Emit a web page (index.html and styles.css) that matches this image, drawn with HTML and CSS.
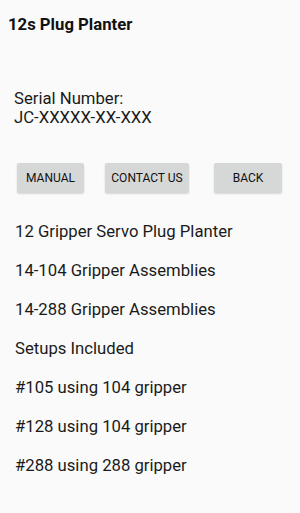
FILE: index.html
```html
<!DOCTYPE html>
<html lang="en">
<head>
    <meta charset="UTF-8">
    <meta name="viewport" content="width=device-width, initial-scale=1.0">
    <title>12s Plug Planter</title>
    <link rel="stylesheet" href="styles.css">
</head>
<body>
    <h1 class="title">12s Plug Planter</h1>

    <div class="serial">
        <div>Serial Number:</div>
        <div>JC-XXXXX-XX-XXX</div>
    </div>

    <div class="buttons">
        <button class="btn btn-manual">MANUAL</button>
        <button class="btn btn-contact">CONTACT US</button>
        <button class="btn btn-back">BACK</button>
    </div>

    <ul class="info-list">
        <li>12 Gripper Servo Plug Planter</li>
        <li>14-104 Gripper Assemblies</li>
        <li>14-288 Gripper Assemblies</li>
        <li>Setups Included</li>
        <li>#105 using 104 gripper</li>
        <li>#128 using 104 gripper</li>
        <li>#288 using 288 gripper</li>
    </ul>
</body>
</html>
```

FILE: styles.css
```css
body {
    margin: 0;
    font-family: Roboto, "Noto Sans", sans-serif;
    background-color: #fafafa;
    color: #1a1a1a;
    width: 300px;
    height: 513px;
    overflow: hidden;
}

.title {
    margin: 0;
    padding: 15px 0 0 8px;
    font-size: 16.7px;
    font-weight: bold;
    line-height: 20px;
    color: #111;
}

.serial {
    margin-top: 54px;
    padding-left: 14px;
    font-size: 16.7px;
    line-height: 19px;
}

.buttons {
    display: flex;
    margin-top: 36px;
    padding-left: 17px;
}

.btn {
    height: 30px;
    padding: 0;
    border: none;
    border-radius: 2px;
    background-color: #d6d7d7;
    box-shadow: 0 1px 2px rgba(0,0,0,0.15);
    font-family: Roboto, "Noto Sans", sans-serif;
    font-size: 12px;
    color: #111;
}

.btn-manual {
    width: 67px;
}

.btn-contact {
    width: 84px;
    margin-left: 21px;
}

.btn-back {
    width: 68px;
    margin-left: 25px;
}

.info-list {
    list-style: none;
    margin: 29px 0 0 0;
    padding: 0 0 0 15px;
    display: flex;
    flex-direction: column;
    gap: 19px;
    font-size: 16.7px;
    line-height: 20px;
}
```
